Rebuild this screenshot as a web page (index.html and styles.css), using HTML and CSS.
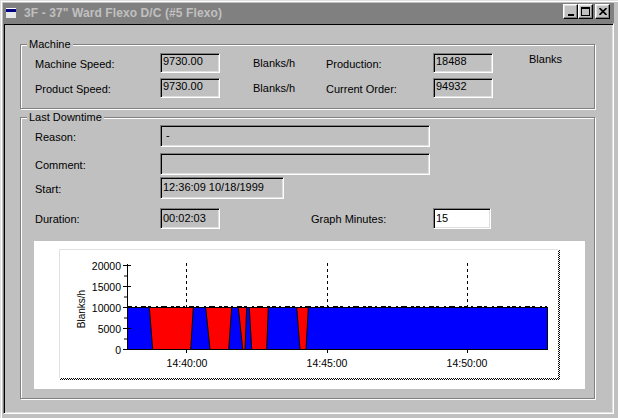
FILE: index.html
```html
<!DOCTYPE html>
<html>
<head>
<meta charset="utf-8">
<link rel="stylesheet" href="styles.css">
</head>
<body>
<div class="window">
  <div class="titlebar">
    <svg class="app-icon" width="12" height="12" viewBox="0 0 12 12">
      <rect x="0.5" y="0.5" width="11" height="11" fill="#ffffff" stroke="#808080"/>
      <rect x="1" y="2" width="10" height="3" fill="#000080"/>
      <rect x="1" y="5" width="10" height="6" fill="#e8e8e8"/>
    </svg>
    <span class="title">3F - 37" Ward Flexo D/C (#5 Flexo)</span>
    <div class="caption-buttons">
      <div class="cbtn"><svg width="8" height="8" viewBox="0 0 8 8"><rect x="1" y="6" width="6" height="2" fill="#000"/></svg></div>
      <div class="cbtn"><svg width="9" height="9" viewBox="0 0 9 9"><rect x="0.5" y="0.5" width="8" height="8" fill="none" stroke="#000"/><rect x="0" y="0" width="9" height="2" fill="#000"/></svg></div>
      <div class="cbtn close"><svg width="8" height="7" viewBox="0 0 8 7"><path d="M0.5 0 L7.5 7 M7.5 0 L0.5 7" stroke="#000" stroke-width="1.6"/></svg></div>
    </div>
  </div>
  <div class="client">
    <div class="group machine">
      <div class="group-title">Machine</div>
      <div class="machine-grid">
        <span class="lbl">Machine Speed:</span>
        <div class="field">9730.00</div>
        <span class="unit">Blanks/h</span>
        <span class="lbl">Production:</span>
        <div class="field">18488</div>
        <span class="unit unit-top">Blanks</span>

        <span class="lbl">Product Speed:</span>
        <div class="field">9730.00</div>
        <span class="unit">Blanks/h</span>
        <span class="lbl">Current Order:</span>
        <div class="field">94932</div>
        <span></span>
      </div>
    </div>

    <div class="group downtime">
      <div class="group-title">Last Downtime</div>
      <div class="dt-rows">
        <div class="row r-reason">
          <span class="lbl">Reason:</span>
          <div class="field tall w-wide"><span class="dash">-</span></div>
        </div>
        <div class="row r-comment">
          <span class="lbl">Comment:</span>
          <div class="field tall w-wide"></div>
        </div>
        <div class="row r-start">
          <span class="lbl">Start:</span>
          <div class="field tall w-start">12:36:09 10/18/1999</div>
        </div>
        <div class="row r-duration">
          <span class="lbl">Duration:</span>
          <div class="field tall w-60 h21">00:02:03</div>
          <span class="lbl lbl-graph">Graph Minutes:</span>
          <div class="field tall w-58 h21 editable">15</div>
        </div>
      </div>

      <div class="chart-panel">
        <svg class="chart" width="551" height="148" viewBox="0 0 551 148">
          <defs>
            <pattern id="chk" width="2" height="2" patternUnits="userSpaceOnUse">
              <rect width="2" height="2" fill="#ffffff"/>
              <rect x="0" y="0" width="1" height="1" fill="#000"/>
              <rect x="1" y="1" width="1" height="1" fill="#000"/>
            </pattern>
          </defs>
          <path d="M25.5 137 V8.5 H524" stroke="#e2e2e2" fill="none"/>
          <rect x="524" y="9" width="2" height="130" fill="url(#chk)"/>
          <rect x="26" y="137" width="500" height="2" fill="url(#chk)"/>

          <g stroke="#000" stroke-width="1" stroke-dasharray="3 3">
            <line x1="152.5" y1="22" x2="152.5" y2="108"/>
            <line x1="293.5" y1="22" x2="293.5" y2="108"/>
            <line x1="433.5" y1="22" x2="433.5" y2="108"/>
          </g>

          <rect x="93.5" y="66.5" width="420" height="42" fill="#0000ff" stroke="#000"/>
          <g fill="#ff0000" stroke="#000" stroke-width="1">
            <polygon points="115.3,66.5 159.3,66.5 156.7,108.5 118.7,108.5"/>
            <polygon points="171.7,66.5 197.7,66.5 194.7,108.5 176,108.5"/>
            <polygon points="204.3,66.5 212.7,66.5 211,108.5 208.7,108.5"/>
            <polygon points="215.3,66.5 234.3,66.5 232.7,108.5 217.7,108.5"/>
            <polygon points="262.7,66.5 274.3,66.5 272,108.5 266,108.5"/>
          </g>
          <line x1="94" y1="65.5" x2="513" y2="65.5" stroke="#000" stroke-dasharray="4 3 2 4 5 2 3 5 2 3 6 4 3 2"/>

          <g stroke="#000" stroke-width="1" fill="none">
            <line x1="93.5" y1="23" x2="93.5" y2="109"/>
            <path d="M89 24.5 H97 M89 45.5 H97 M89 66.5 H97 M89 87.5 H97 M89 108.5 H97"/>
            <path d="M90 35 H93 M90 56 H93 M90 77 H93 M90 98 H93"/>
            <path d="M152.5 108 V112 M293.5 108 V112 M433.5 108 V112"/>
          </g>

          <g class="ax" font-size="10.5" text-anchor="end">
            <text x="87" y="28.5">20000</text>
            <text x="87" y="49.5">15000</text>
            <text x="87" y="70.5">10000</text>
            <text x="87" y="91.5">5000</text>
            <text x="87" y="112.5">0</text>
          </g>
          <g class="ax" font-size="10.5" text-anchor="middle">
            <text x="153" y="126">14:40:00</text>
            <text x="293" y="126">14:45:00</text>
            <text x="433" y="126">14:50:00</text>
          </g>
          <text class="ax" font-size="10" text-anchor="middle" transform="translate(50.6,68) rotate(-90)">Blanks/h</text>
        </svg>
      </div>
    </div>
  </div>
</div>
</body>
</html>
```

FILE: styles.css
```css
html, body {
  margin: 0;
  padding: 0;
  background: #c0c0c0;
}

body {
  font-family: "Liberation Sans", Arial, sans-serif;
  font-size: 11px;
  color: #000;
}

.window {
  width: 618px;
  height: 418px;
  box-sizing: border-box;
  background: #c0c0c0;
  border-top: 1px solid #dfdfdf;
  border-left: 1px solid #dfdfdf;
  box-shadow: inset 1px 1px #ffffff;
  padding: 2px 4px 4px 2px;
  display: flex;
  flex-direction: column;
  overflow: hidden;
}

.titlebar {
  flex: none;
  height: 20px;
  background: #808080;
  display: flex;
  align-items: center;
  padding: 0 4px 0 2px;
}

.app-icon {
  flex: none;
  margin-right: 7px;
}

.title {
  flex: 1;
  color: #c0c0c0;
  font-weight: bold;
  font-size: 12px;
  letter-spacing: 0.1px;
  white-space: nowrap;
}

.caption-buttons {
  display: flex;
  align-self: flex-start;
  margin-top: 1px;
}

.cbtn {
  width: 15px;
  height: 15px;
  box-sizing: border-box;
  background: #c0c0c0;
  border: 1px solid;
  border-color: #ffffff #000 #000 #ffffff;
  box-shadow: inset -1px -1px #808080, inset 1px 1px #dfdfdf;
  display: flex;
  align-items: center;
  justify-content: center;
}

.cbtn.close {
  margin-left: 2px;
}

.client {
  flex: 1;
  box-sizing: border-box;
  border: 1px solid;
  border-color: #808080 #ffffff #ffffff #808080;
  box-shadow: inset 1px 1px #000, inset -1px -1px #dfdfdf;
  padding: 20px 0 0 16px;
}

.group {
  width: 575px;
  box-sizing: border-box;
  border: 1px solid #808080;
  box-shadow: inset 1px 1px #ffffff, 1px 1px #ffffff;
}

.group.machine {
  height: 65px;
}

.group.downtime {
  height: 282px;
  margin-top: 8px;
}

.group-title {
  width: fit-content;
  margin: -7px 0 0 6px;
  padding: 0 2px;
  background: #c0c0c0;
  line-height: 13px;
  white-space: nowrap;
}

.lbl {
  line-height: 13px;
  padding-top: 2px;
  white-space: nowrap;
}

.unit {
  line-height: 13px;
  padding-left: 33px;
  white-space: nowrap;
}

.unit-top {
  align-self: start;
  padding-left: 36px;
}

.machine-grid {
  display: grid;
  grid-template-columns: 125px 60px 106px 107px 60px 1fr;
  grid-template-rows: 20px 20px;
  row-gap: 5px;
  align-items: center;
  margin-top: 2px;
  padding-left: 14px;
}

.field {
  box-sizing: border-box;
  height: 20px;
  border: 1px solid;
  border-color: #808080 #ffffff #ffffff #808080;
  box-shadow: inset 1px 1px #000, inset -1px -1px #dfdfdf;
  background: #c0c0c0;
  padding: 1px 0 0 2px;
  line-height: 12px;
  white-space: nowrap;
  overflow: hidden;
}

.field.tall {
  height: 22px;
  padding-top: 3px;
}

.field.h21 {
  height: 21px;
}

.field.editable {
  background: #ffffff;
}

.w-wide { width: 270px; }
.w-start { width: 124px; }
.w-60 { width: 60px; }
.w-58 { width: 58px; }

.dash {
  padding-left: 3px;
}

.dt-rows {
  padding-left: 14px;
}

.row {
  display: flex;
  align-items: center;
}

.row .lbl {
  width: 125px;
}

.row .lbl.lbl-graph {
  width: 122px;
  margin-left: 91px;
}

.r-reason { margin-top: 1px; }
.r-comment { margin-top: 6px; }
.r-start { margin-top: 2px; }
.r-duration { margin-top: 9px; }

.chart-panel {
  width: 551px;
  height: 148px;
  margin: 12px 0 0 13px;
  background: #ffffff;
}

.chart {
  display: block;
}

.ax {
  font-family: "Liberation Sans", Arial, sans-serif;
  fill: #000;
}
```
